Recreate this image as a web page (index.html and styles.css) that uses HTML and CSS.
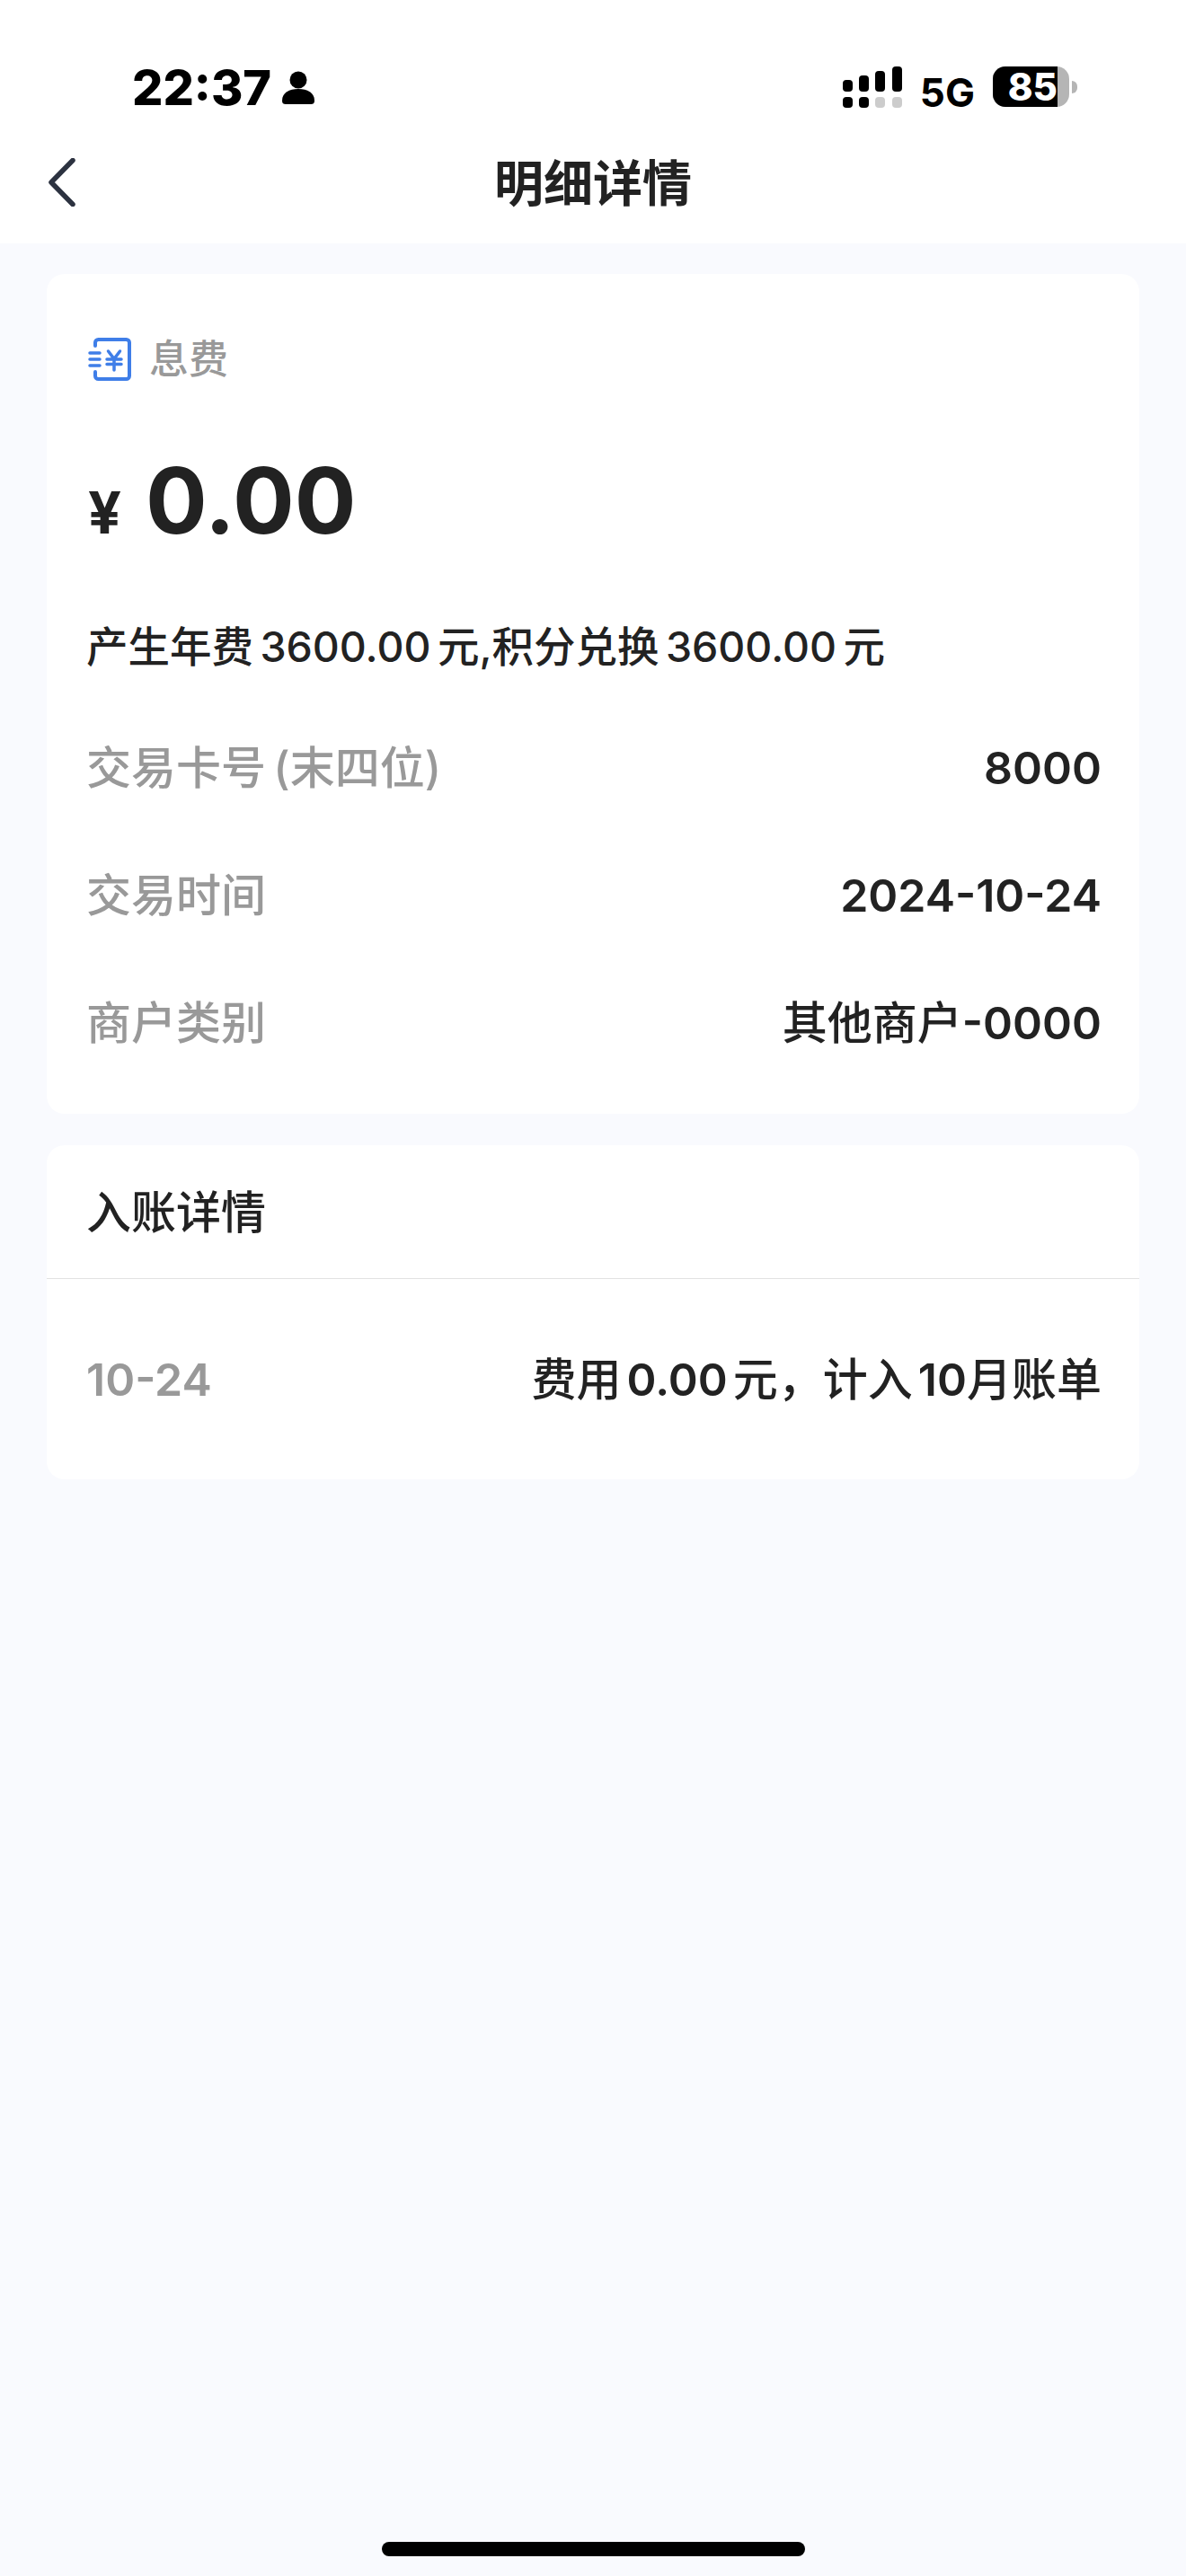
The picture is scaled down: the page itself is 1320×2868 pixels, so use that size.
FILE: index.html
```html
<!DOCTYPE html>
<html lang="zh-CN">
<head>
	<meta charset="utf-8">
	<title>明细详情</title>
	<link rel="stylesheet" href="styles.css">
</head>
<body>
	<div class="page">
		<header class="top">
			<div class="status">
				<div class="status-left">
					<span class="clock">22:37</span>
					<svg class="person" viewBox="0 0 36 38"><circle cx="18" cy="10" r="9.500"/><path d="M0 33c0-9 8-13 18-13s18 4 18 13c0 3-1.500 4-4 4H4c-2.500 0-4-1-4-4z"/></svg>
				</div>
				<div class="status-right">
					<svg class="signal" viewBox="0 0 66 46">
						<rect x="0" y="15" width="11" height="13" rx="4"/>
						<rect x="18" y="10" width="11" height="18" rx="4"/>
						<rect x="36" y="5" width="11" height="23" rx="4"/>
						<rect x="55" y="0" width="11" height="28" rx="4"/>
						<rect x="0" y="34" width="11" height="12" rx="4"/>
						<rect x="18" y="34" width="11" height="12" rx="4"/>
						<rect class="off" x="36" y="34" width="11" height="12" rx="4"/>
						<rect class="off" x="55" y="34" width="11" height="12" rx="4"/>
					</svg>
					<span class="net">5G</span>
					<div class="battery">
						<div class="battery-body">
							<div class="battery-fill">85</div>
						</div>
						<div class="battery-cap"></div>
					</div>
				</div>
			</div>
			<nav class="nav">
				<svg class="back" viewBox="0 0 30 54"><path d="M27 2.500 3 27l24 24.500"/></svg>
				<h1 class="nav-title">明细详情</h1>
			</nav>
		</header>

		<main class="main">
			<section class="card summary">
				<div class="type">
					<svg class="type-icon" viewBox="0 0 48 48">
						<path class="ln" d="M8 9V5.500C8 3.500 9.500 2 11.500 2h31c2 0 3.500 1.500 3.500 3.500v37c0 2-1.500 3.500-3.500 3.500h-31C9.500 46 8 44.500 8 42.500V38"/>
						<path class="ln thin" d="M2 17h11M2 24h11M2 31h11"/>
						<path class="ln thin" d="M22.500 15l6.500 8.500 6.500-8.500M21 24h16M21 29.500h16M29 24v12"/>
					</svg>
					<span class="type-name">息费</span>
				</div>
				<div class="amount">
					<span class="currency">¥</span>
					<span class="value">0.00</span>
				</div>
				<p class="desc">产生年费 3600.00 元,积分兑换 3600.00 元</p>
				<div class="row"><span class="label">交易卡号 (末四位)</span><span class="val">8000</span></div>
				<div class="row"><span class="label">交易时间</span><span class="val">2024-10-24</span></div>
				<div class="row"><span class="label">商户类别</span><span class="val"><span class="zh">其他商户</span>-0000</span></div>
			</section>

			<section class="card posting">
				<div class="posting-head">入账详情</div>
				<div class="row posting-row"><span class="label num">10-24</span><span class="val"><span class="zh">费用</span> 0.00 <span class="zh">元，计入</span> 10<span class="zh">月账单</span></span></div>
			</section>
		</main>

		<div class="home-bar"></div>
	</div>
</body>
</html>
```

FILE: styles.css
```css
html, body {
	margin: 0;
	height: 100%;
}
body {
	background: #f9fafe;
	color: #222;
	font-family: Inter, "Noto Sans CJK SC", sans-serif;
}
.page {
	height: 2868px;
	display: flex;
	flex-direction: column;
}

.top {
	background: #fff;
	height: 271px;
	flex: none;
}
.status {
	height: 150px;
	display: flex;
	justify-content: space-between;
	padding: 70px 121px 0 147px;
	box-sizing: border-box;
	color: #000;
}
.status-left {
	display: flex;
	align-items: flex-start;
}
.clock {
	font-size: 54px;
	font-weight: 800;
	line-height: 56px;
}
.person {
	width: 36px;
	height: 38px;
	margin: 9px 0 0 12px;
}
.status-right {
	display: flex;
	align-items: flex-start;
}
.signal {
	width: 66px;
	height: 46px;
	margin-top: 4px;
}
.signal .off {
	fill: #ccc;
}
.net {
	font-size: 44px;
	font-weight: 700;
	line-height: 48px;
	margin: 9px 0 0 20px;
}
.battery {
	display: flex;
	align-items: center;
	margin: 4px 0 0 20px;
}
.battery-body {
	width: 85px;
	height: 45px;
	border-radius: 14px;
	background: #b5b5b5;
}
.battery-fill {
	width: 72px;
	height: 45px;
	background: #000;
	border-radius: 14px 0 0 14px;
	color: #fff;
	font-size: 42px;
	font-weight: 800;
	line-height: 45px;
	text-align: right;
}
.battery-cap {
	width: 6px;
	height: 14px;
	margin-left: 3px;
	background: #b5b5b5;
	border-radius: 0 7px 7px 0;
}

.nav {
	height: 121px;
	position: relative;
	display: flex;
	align-items: center;
	justify-content: center;
}
.back {
	position: absolute;
	left: 54px;
	top: 26px;
	width: 30px;
	height: 54px;
	fill: none;
	stroke: #2c3240;
	stroke-width: 5.500;
	stroke-linecap: round;
	stroke-linejoin: round;
}
.nav-title {
	margin: 0 0 14px;
	font-size: 55px;
	font-weight: 700;
	line-height: 70px;
	color: #222;
}

.main {
	padding: 34px 52px 0;
	display: flex;
	flex-direction: column;
	gap: 35px;
}
.card {
	background: #fff;
	border-radius: 20px;
}
.summary {
	height: 935px;
	padding: 0 44px;
	box-sizing: border-box;
}
.type {
	display: flex;
	align-items: center;
	padding-top: 68px;
	height: 54px;
}
.type-icon {
	width: 48px;
	height: 48px;
	margin-left: 2px;
	fill: none;
	stroke: #3f7ee8;
}
.ln {
	stroke-width: 4;
	stroke-linecap: round;
}
.ln.thin {
	stroke-width: 3.500;
}
.type-name {
	margin-left: 20px;
	font-size: 44px;
	font-weight: 500;
	line-height: 54px;
	color: #999;
}
.amount {
	display: flex;
	align-items: baseline;
	margin-top: 60px;
	height: 140px;
}
.currency {
	font-size: 65px;
	font-weight: 700;
	margin-left: 2px;
}
.value {
	font-size: 102px;
	font-weight: 700;
	line-height: 140px;
	margin-left: 27px;
}
.desc {
	margin: 60px 0 0;
	font-size: 46.500px;
	font-weight: 500;
	line-height: 66px;
	word-spacing: -5px;
}
.row {
	display: flex;
	justify-content: space-between;
	align-items: baseline;
	height: 66px;
	margin-top: 76px;
	font-size: 50px;
	line-height: 66px;
}
.desc + .row {
	margin-top: 69px;
}
.label {
	color: #999;
	font-weight: 500;
	word-spacing: -5px;
}
.label.num {
	font-weight: 600;
}
.val {
	color: #222;
	font-weight: 600;
	word-spacing: -6.500px;
	margin-right: -2px;
}
.zh {
	font-weight: 500;
}

.posting {
	height: 372px;
}
.posting-head {
	height: 149px;
	padding: 0 44px 6px;
	box-sizing: border-box;
	display: flex;
	align-items: center;
	font-size: 50px;
	font-weight: 500;
	border-bottom: 1px solid #e2e2e2;
}
.posting-row {
	margin: 0;
	padding: 79px 44px 0;
	height: 223px;
	box-sizing: border-box;
}

.home-bar {
	margin: auto auto 22px;
	width: 471px;
	height: 16px;
	border-radius: 8px;
	background: #000;
}
```
